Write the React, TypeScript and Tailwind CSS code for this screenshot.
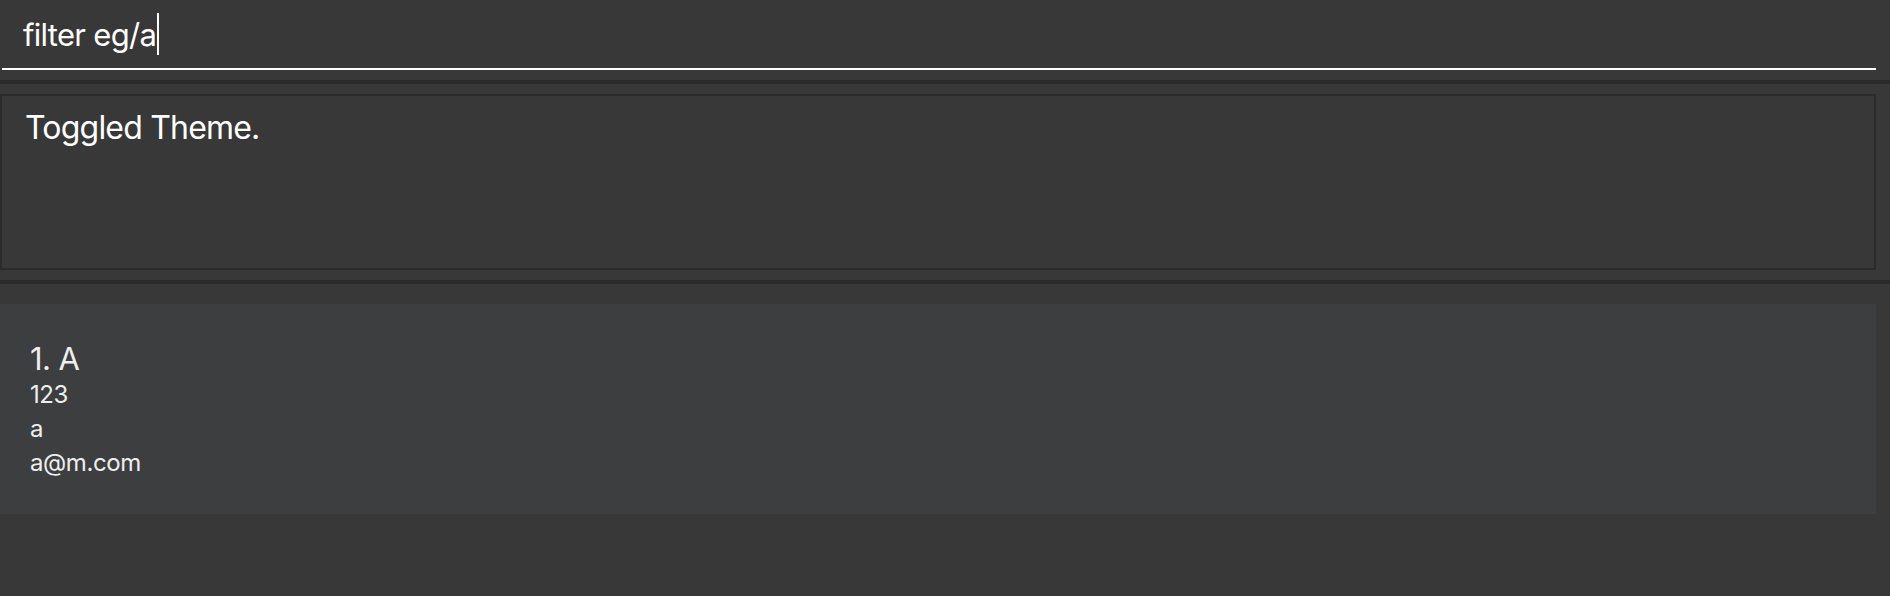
export default function App() {
  return (
    <div className="w-[1890px] h-[596px] bg-[#383838] flex flex-col font-['Inter','Liberation_Sans',sans-serif] overflow-hidden">
      {/* command box */}
      <div className="h-[80px] pl-[2px] pr-[14px]">
        <div className="h-[70px] border-b-2 border-white flex items-start pl-[21px]">
          <span className="mt-[16px] text-[31px] leading-[38px] text-white tracking-[-0.7px]">filter eg/a</span>
          <div className="mt-[13px] ml-[1px] w-[2px] h-[42px] bg-white" />
        </div>
      </div>
      <div className="h-[4px] bg-[#2b2b2b]" />

      {/* result display */}
      <div className="h-[196px] pt-[10px] pb-[10px] pr-[14px]">
        <div className="h-full border-2 border-[#2b2b2b] bg-[#383838] pl-[23px] pt-[12px]">
          <p className="text-[32px] leading-[40px] text-white tracking-[-0.8px]">Toggled Theme.</p>
        </div>
      </div>
      <div className="h-[4px] bg-[#2b2b2b]" />

      {/* person list */}
      <div className="flex-1 pt-[20px] pr-[14px]">
        <div className="bg-[#3d3e40] pl-[30px] pt-[36px] pb-[34px] text-[#eeeeee]">
          <div className="text-[31px] leading-[38px] tracking-[-0.6px]">1. A</div>
          <div className="text-[24px] leading-[34px] tracking-[-0.4px]">123</div>
          <div className="text-[24px] leading-[34px] tracking-[-0.4px]">a</div>
          <div className="text-[24px] leading-[34px] tracking-[-0.4px]">a@m.com</div>
        </div>
      </div>
    </div>
  );
}
